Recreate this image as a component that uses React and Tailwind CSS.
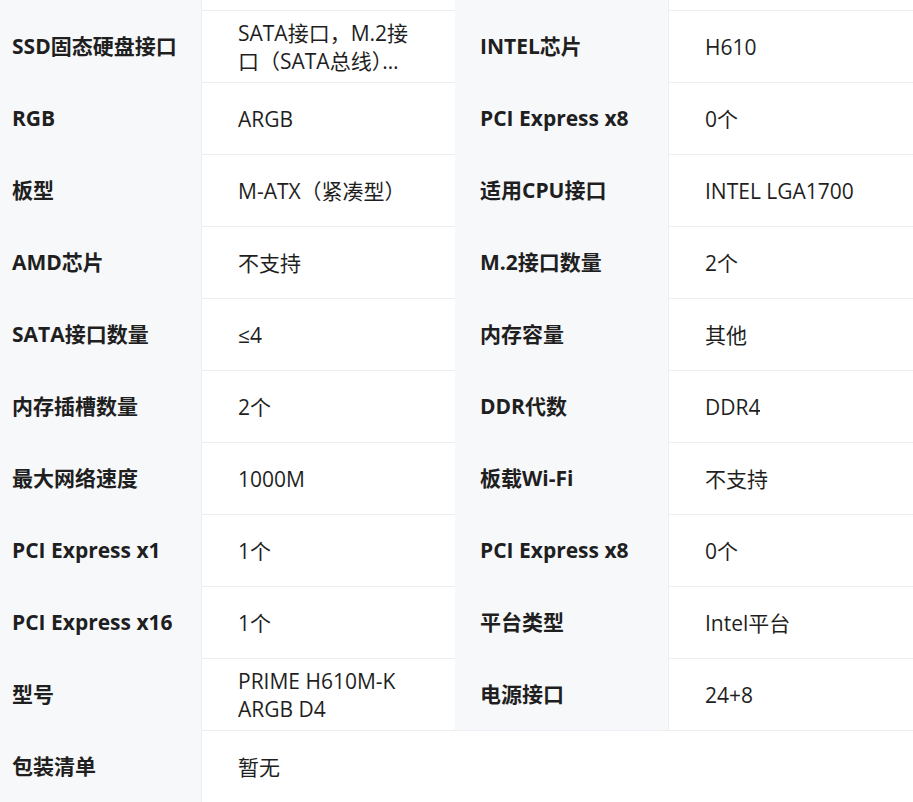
import React from 'react';

// 参数表：每行两组 label / value
const rows = [
  ['SSD固态硬盘接口', 'SATA接口，M.2接口（SATA总线），M.2接口（PCIe总线）', 'INTEL芯片', 'H610'],
  ['RGB', 'ARGB', 'PCI Express x8', '0个'],
  ['板型', 'M-ATX（紧凑型）', '适用CPU接口', 'INTEL LGA1700'],
  ['AMD芯片', '不支持', 'M.2接口数量', '2个'],
  ['SATA接口数量', '≤4', '内存容量', '其他'],
  ['内存插槽数量', '2个', 'DDR代数', 'DDR4'],
  ['最大网络速度', '1000M', '板载Wi-Fi', '不支持'],
  ['PCI Express x1', '1个', 'PCI Express x8', '0个'],
  ['PCI Express x16', '1个', '平台类型', 'Intel平台'],
  ['型号', 'PRIME H610M-K ARGB D4', '电源接口', '24+8'],
];

const Label = ({ children, first }) => (
  <div
    className={`flex items-center bg-[#f7f8fa] font-bold border-r border-[#eceef1] ${
      first ? 'w-[202px] pl-3' : 'w-[214px] pl-[25px]'
    }`}
  >
    {children}
  </div>
);

const Value = ({ children, grow }) => (
  <div
    className={`flex items-center border-b border-[#eceef1] px-9 ${grow ? 'flex-1' : 'w-[253px]'}`}
  >
    <span className="line-clamp-2 leading-[28px]">{children}</span>
  </div>
);

export default function App() {
  return (
    <div
      className="w-[913px] h-[802px] overflow-hidden bg-white text-[21px] text-[#1f1f1f]"
      style={{ fontFamily: '"Open Sans", "Noto Sans CJK SC", sans-serif' }}
    >
      {/* 顶部被截断的一行 */}
      <div className="flex h-[11px]">
        <div className="w-[202px] bg-[#f7f8fa] border-r border-[#eceef1]" />
        <div className="w-[253px] border-b border-[#eceef1]" />
        <div className="w-[214px] bg-[#f7f8fa] border-r border-[#eceef1]" />
        <div className="flex-1 border-b border-[#eceef1]" />
      </div>

      {rows.map(([l1, v1, l2, v2], i) => (
        <div key={i} className="flex h-[72px]">
          <Label first>{l1}</Label>
          <Value>{v1}</Value>
          <div
            className={`flex items-center w-[214px] pl-[25px] bg-[#f7f8fa] font-bold border-r border-[#eceef1] ${
              i === rows.length - 1 ? 'border-b' : ''
            }`}
          >
            {l2}
          </div>
          <Value grow>{v2}</Value>
        </div>
      ))}

      {/* 最后一行 */}
      <div className="flex h-[72px]">
        <Label first>包装清单</Label>
        <Value>暂无</Value>
        <div className="flex-1 border-b border-[#eceef1]" />
      </div>
    </div>
  );
}
